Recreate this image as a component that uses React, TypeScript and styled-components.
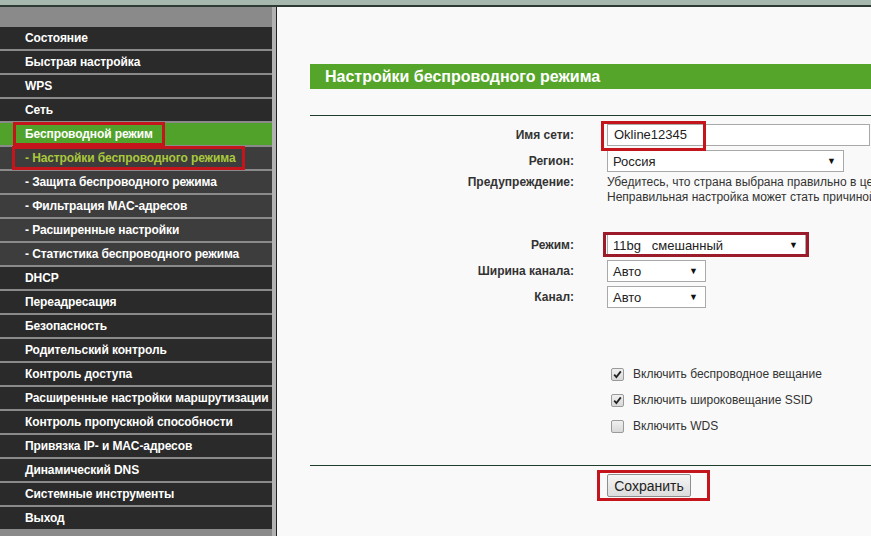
import styled, { createGlobalStyle } from "styled-components";

const GlobalStyle = createGlobalStyle`
  html, body {
    margin: 0;
    padding: 0;
    height: 100%;
    overflow: hidden;
  }
  body {
    font-family: "Liberation Sans", Arial, sans-serif;
    background: #f9f9f9;
  }
`;

type MenuEntry = {
  label: string;
  sub?: boolean;
  active?: boolean;
  current?: boolean;
};

const menu: MenuEntry[] = [
  { label: "Состояние" },
  { label: "Быстрая настройка" },
  { label: "WPS" },
  { label: "Сеть" },
  { label: "Беспроводной режим", active: true },
  { label: "- Настройки беспроводного режима", sub: true, current: true },
  { label: "- Защита беспроводного режима", sub: true },
  { label: "- Фильтрация MAC-адресов", sub: true },
  { label: "- Расширенные настройки", sub: true },
  { label: "- Статистика беспроводного режима", sub: true },
  { label: "DHCP" },
  { label: "Переадресация" },
  { label: "Безопасность" },
  { label: "Родительский контроль" },
  { label: "Контроль доступа" },
  { label: "Расширенные настройки маршрутизации" },
  { label: "Контроль пропускной способности" },
  { label: "Привязка IP- и MAC-адресов" },
  { label: "Динамический DNS" },
  { label: "Системные инструменты" },
  { label: "Выход" },
];

const checks = [
  { label: "Включить беспроводное вещание", checked: true },
  { label: "Включить широковещание SSID", checked: true },
  { label: "Включить WDS", checked: false },
];

const App = () => {
  return (
    <>
      <GlobalStyle />
      <Page>
        <TopStrip />
        <Body>
          <Sidebar>
            {menu.map((item) => (
              <MenuItem
                key={item.label}
                $sub={item.sub}
                $active={item.active}
                $current={item.current}
              >
                {item.active || item.current ? (
                  <Annotated
                    $left={item.active ? -12 : -13}
                    $top={-1}
                    $width={item.active ? 152 : 233}
                    $height={24}
                  >
                    {item.label}
                  </Annotated>
                ) : (
                  item.label
                )}
              </MenuItem>
            ))}
          </Sidebar>
          <Content>
            <TitleBar>Настройки беспроводного режима</TitleBar>
            <Divider $mt={26} />
            <Form>
              <Row>
                <Label>Имя сети:</Label>
                <Annotated $left={-6} $top={-3} $width={105} $height={30}>
                  <TextInput>Okline12345</TextInput>
                </Annotated>
              </Row>
              <Row $mt={4}>
                <Label>Регион:</Label>
                <Select $width={237}>
                  <span>Россия</span>
                  <Arrow>▼</Arrow>
                </Select>
              </Row>
              <Row $mt={3} $top>
                <Label>Предупреждение:</Label>
                <Warning>
                  <div>
                    Убедитесь, что страна выбрана правильно в целях
                    соответствия местному законодательству.
                  </div>
                  <div>
                    Неправильная настройка может стать причиной помех.
                  </div>
                </Warning>
              </Row>
              <Row $mt={29}>
                <Label>Режим:</Label>
                <Annotated
                  $left={-4}
                  $top={-2}
                  $width={206}
                  $height={25}
                  $color="#9b1b2b"
                >
                  <Select $width={199}>
                    <span>11bg   смешанный</span>
                    <Arrow>▼</Arrow>
                  </Select>
                </Annotated>
              </Row>
              <Row $mt={4}>
                <Label>Ширина канала:</Label>
                <Select $width={99}>
                  <span>Авто</span>
                  <Arrow>▼</Arrow>
                </Select>
              </Row>
              <Row $mt={4}>
                <Label>Канал:</Label>
                <Select $width={99}>
                  <span>Авто</span>
                  <Arrow>▼</Arrow>
                </Select>
              </Row>
              <CheckList>
                {checks.map((c) => (
                  <CheckRow key={c.label}>
                    <CheckBox>
                      {c.checked && (
                        <svg width="9" height="9" viewBox="0 0 9 9">
                          <path
                            d="M1.2 4.6 L3.4 7 L7.8 1.4"
                            fill="none"
                            stroke="#222"
                            strokeWidth="1.8"
                          />
                        </svg>
                      )}
                    </CheckBox>
                    {c.label}
                  </CheckRow>
                ))}
              </CheckList>
            </Form>
            <Divider $mt={26} />
            <ButtonRow>
              <Annotated $left={-10} $top={-4} $width={113} $height={31}>
                <SaveButton>Сохранить</SaveButton>
              </Annotated>
            </ButtonRow>
          </Content>
        </Body>
      </Page>
    </>
  );
};

const Page = styled.div`
  width: 871px;
  height: 536px;
  display: flex;
  flex-direction: column;
  overflow: hidden;
`;

const TopStrip = styled.div`
  height: 5px;
  flex-shrink: 0;
  background: #a7b8ae;
  border-bottom: 2px solid #2e3b34;
`;

const Body = styled.div`
  flex: 1;
  display: flex;
  min-height: 0;
`;

const Sidebar = styled.nav`
  width: 272px;
  flex-shrink: 0;
  background: #8a8a8a;
  border-right: 4px solid #b2b2b2;
  padding-top: 20px;
  display: flex;
  flex-direction: column;
  gap: 2px;
`;

const MenuItem = styled.div<{
  $sub?: boolean;
  $active?: boolean;
  $current?: boolean;
}>`
  height: 22px;
  line-height: 22px;
  padding-left: 25px;
  font-size: 12px;
  font-weight: bold;
  letter-spacing: -0.1px;
  white-space: nowrap;
  color: ${(p) => (p.$current ? "#a9c83c" : "#fff")};
  background: ${(p) =>
    p.$active ? "#51a22a" : p.$sub ? "#3d3d3d" : "#2a2a2a"};
`;

const Annotated = styled.span<{
  $left: number;
  $top: number;
  $width: number;
  $height: number;
  $color?: string;
}>`
  position: relative;
  display: inline-block;
  vertical-align: top;

  &::after {
    content: "";
    position: absolute;
    left: ${(p) => p.$left}px;
    top: ${(p) => p.$top}px;
    width: ${(p) => p.$width}px;
    height: ${(p) => p.$height}px;
    box-sizing: border-box;
    border: 3px solid ${(p) => p.$color ?? "#c4141c"};
    pointer-events: none;
  }
`;

const Content = styled.main`
  flex: 1;
  min-width: 0;
  border-left: 1px solid #222;
  background: #f9f9f9;
  padding: 57px 0 0 33px;
  overflow: hidden;
`;

const TitleBar = styled.h2`
  margin: 0;
  height: 25px;
  line-height: 25px;
  padding-left: 15px;
  background: #55a52b;
  color: #fff;
  font-size: 16px;
  font-weight: bold;
  white-space: nowrap;
`;

const Divider = styled.div<{ $mt: number }>`
  margin-top: ${(p) => p.$mt}px;
  border-top: 1px solid #1f3e2c;
`;

const Form = styled.div`
  padding-top: 8px;
`;

const Row = styled.div<{ $mt?: number; $top?: boolean }>`
  display: flex;
  align-items: ${(p) => (p.$top ? "flex-start" : "center")};
  margin-top: ${(p) => p.$mt ?? 0}px;
  min-height: 22px;
`;

const Label = styled.div`
  width: 264px;
  flex-shrink: 0;
  margin-right: 33px;
  text-align: right;
  font-size: 12px;
  font-weight: bold;
  line-height: 15px;
  color: #333;
`;

const TextInput = styled.div`
  width: 263px;
  height: 22px;
  box-sizing: border-box;
  border: 1px solid #a9a9a9;
  background: #fff;
  padding-left: 6px;
  font-size: 13px;
  line-height: 20px;
  color: #222;
`;

const Select = styled.div<{ $width: number }>`
  width: ${(p) => p.$width}px;
  height: 22px;
  box-sizing: border-box;
  border: 1px solid #a9a9a9;
  background: #fff;
  padding: 0 7px 0 5px;
  display: flex;
  align-items: center;
  justify-content: space-between;
  font-size: 13px;
  color: #222;
  white-space: pre;
`;

const Arrow = styled.span`
  font-size: 9px;
  color: #111;
`;

const Warning = styled.div`
  font-size: 12px;
  line-height: 15px;
  color: #333;
  white-space: nowrap;
`;

const CheckList = styled.div`
  margin-top: 53px;
  padding-left: 301px;
  display: flex;
  flex-direction: column;
`;

const CheckRow = styled.label`
  height: 26px;
  display: flex;
  align-items: center;
  font-size: 12px;
  color: #333;
`;

const CheckBox = styled.span`
  width: 13px;
  height: 13px;
  box-sizing: border-box;
  margin-right: 9px;
  border: 1px solid #9a9a9a;
  border-radius: 2px;
  background: linear-gradient(#f0f0f0, #d8d8d8);
  display: flex;
  align-items: center;
  justify-content: center;
`;

const ButtonRow = styled.div`
  margin-top: 8px;
  padding-left: 297px;
`;

const SaveButton = styled.button`
  width: 84px;
  height: 23px;
  padding: 0;
  border: 1px solid #8e8e8e;
  border-radius: 2px;
  background: linear-gradient(#f5f5f5, #dcdcdc);
  font-family: "Liberation Sans", Arial, sans-serif;
  font-size: 14px;
  color: #222;
`;

export default App;
